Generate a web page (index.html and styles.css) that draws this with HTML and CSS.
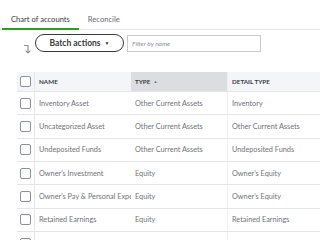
FILE: index.html
```html
<!DOCTYPE html>
<html>
<head>
<meta charset="utf-8">
<link rel="stylesheet" href="styles.css">
</head>
<body>
<div class="tabs">
  <div class="tab active">Chart of accounts</div>
  <div class="tab">Reconcile</div>
</div>
<div class="toolbar">
  <svg class="sel-icon" width="9" height="10" viewBox="0 0 9 10"><path d="M1 1.5 H5 V9" fill="none" stroke="#8d9096" stroke-width="1.2"/><path d="M2.6 6.6 L5 9 L7.4 6.6" fill="none" stroke="#8d9096" stroke-width="1.2"/></svg>
  <button class="batch">Batch actions <span class="caret">&#9660;</span></button>
  <div class="filter">Filter by name</div>
</div>
<div class="grid">
  <div class="row head">
    <div class="cb-cell"><span class="cb"></span></div>
    <div class="cell">NAME</div>
    <div class="cell sorted">TYPE <span class="arrow">&#9650;</span></div>
    <div class="cell detail">DETAIL TYPE</div>
  </div>
  <div class="row">
    <div class="cb-cell"><span class="cb"></span></div>
    <div class="cell">Inventory Asset</div>
    <div class="cell">Other Current Assets</div>
    <div class="cell detail">Inventory</div>
  </div>
  <div class="row">
    <div class="cb-cell"><span class="cb"></span></div>
    <div class="cell">Uncategorized Asset</div>
    <div class="cell">Other Current Assets</div>
    <div class="cell detail">Other Current Assets</div>
  </div>
  <div class="row">
    <div class="cb-cell"><span class="cb"></span></div>
    <div class="cell">Undeposited Funds</div>
    <div class="cell">Other Current Assets</div>
    <div class="cell detail">Undeposited Funds</div>
  </div>
  <div class="row">
    <div class="cb-cell"><span class="cb"></span></div>
    <div class="cell">Owner's Investment</div>
    <div class="cell">Equity</div>
    <div class="cell detail">Owner's Equity</div>
  </div>
  <div class="row">
    <div class="cb-cell"><span class="cb"></span></div>
    <div class="cell">Owner's Pay &amp; Personal Expenses</div>
    <div class="cell">Equity</div>
    <div class="cell detail">Owner's Equity</div>
  </div>
  <div class="row">
    <div class="cb-cell"><span class="cb"></span></div>
    <div class="cell">Retained Earnings</div>
    <div class="cell">Equity</div>
    <div class="cell detail">Retained Earnings</div>
  </div>
  <div class="row">
    <div class="cb-cell"><span class="cb"></span></div>
    <div class="cell">Opening Balance Equity</div>
    <div class="cell">Equity</div>
    <div class="cell detail">Opening Balance Equity</div>
  </div>
</div>
</body>
</html>
```
FILE: styles.css
```css
html, body {
  margin: 0;
  padding: 0;
  background: #fff;
  overflow: hidden;
  width: 320px;
  height: 240px;
}
body {
  font-family: Lato, "Open Sans", sans-serif;
  color: #393a3d;
}
.tabs {
  display: flex;
  align-items: flex-start;
  height: 30px;
  box-sizing: border-box;
  border-bottom: 1px solid #e4e5e8;
  padding-left: 2px;
}
.tab {
  height: 30px;
  box-sizing: border-box;
  padding: 15px 9px 0;
  font-size: 7.6px;
  line-height: 9px;
  color: #6b6c72;
  border-bottom: 2px solid transparent;
}
.tab.active {
  color: #393a3d;
  border-bottom-color: #2ca01c;
}
.toolbar {
  display: flex;
  align-items: center;
  margin-top: 4px;
  padding-left: 23px;
  height: 18px;
}
.sel-icon {
  margin-top: 12px;
  margin-right: 3px;
}
.batch {
  width: 89px;
  height: 18px;
  box-sizing: border-box;
  border: 1.5px solid #393a3d;
  border-radius: 9px;
  background: #fff;
  font-family: Lato, sans-serif;
  font-weight: 700;
  font-size: 8.5px;
  color: #393a3d;
  padding: 0;
  display: flex;
  align-items: center;
  justify-content: center;
  gap: 4px;
}
.caret {
  font-size: 5px;
}
.filter {
  margin-left: 3px;
  width: 134px;
  height: 17px;
  box-sizing: border-box;
  border: 1px solid #c9cbcf;
  font-size: 6.5px;
  font-style: italic;
  color: #8d9096;
  padding-left: 4px;
  display: flex;
  align-items: center;
}
.grid {
  margin-top: 20px;
  margin-left: 17px;
}
.row {
  display: grid;
  grid-template-columns: 18px 96px 96px 120px;
  height: 23.333px;
  box-sizing: border-box;
  border-bottom: 1px solid #e4e5e8;
}
.row.head {
  height: 20px;
  background: #f4f5f8;
  border-bottom: 1px solid #e4e5e8;
}
.cb-cell {
  display: flex;
  align-items: center;
  justify-content: center;
  border-right: 1px solid #e4e5e8;
}
.cb {
  width: 11px;
  height: 11px;
  box-sizing: border-box;
  border: 1px solid #8d9096;
  border-radius: 2px;
  background: #fff;
}
.cell {
  display: flex;
  align-items: center;
  padding-left: 4px;
  font-size: 7.3px;
  color: #717277;
  white-space: nowrap;
  overflow: hidden;
}
.head .cell {
  font-size: 6.3px;
  font-weight: 700;
  color: #393a3d;
}
.head .sorted {
  background: #dcdde1;
}
.arrow {
  font-size: 4px;
  margin-left: 3px;
  color: #6b6c72;
}
.cell.detail {
  border-left: 1px solid #eeeff2;
}
```
